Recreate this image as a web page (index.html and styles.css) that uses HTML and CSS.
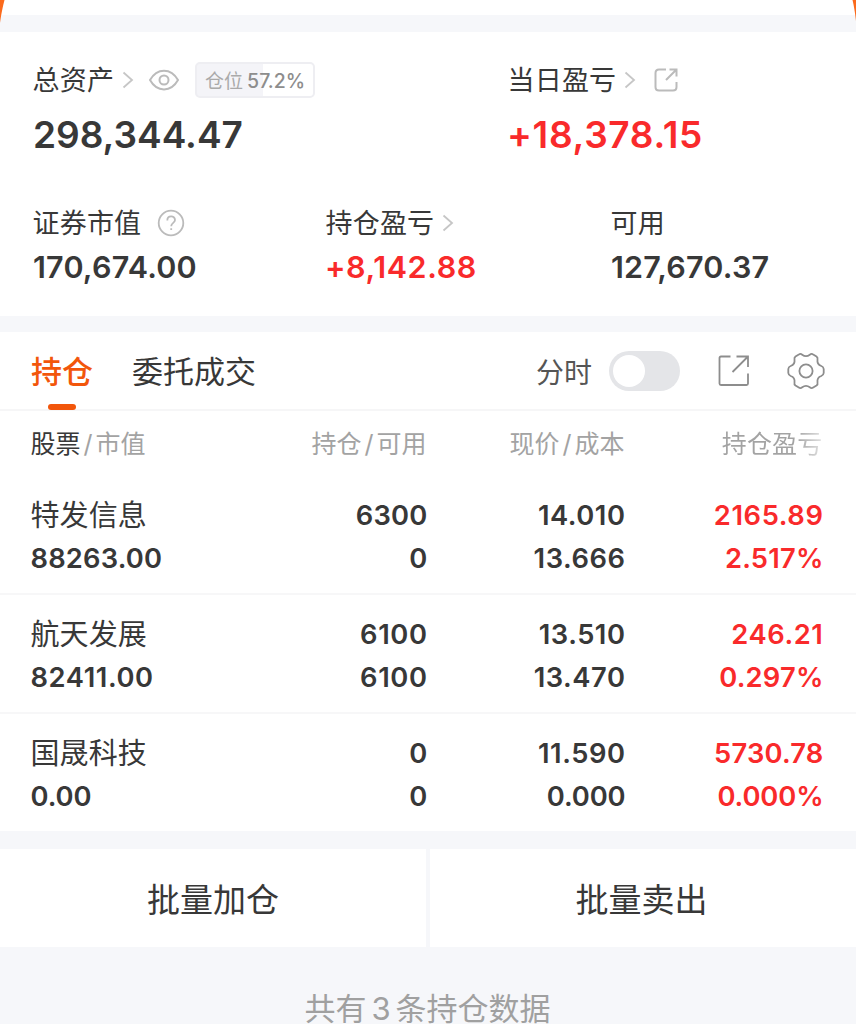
FILE: index.html
```
<!DOCTYPE html>
<html lang="zh-CN">
<head>
<meta charset="utf-8">
<title>持仓</title>
<link rel="stylesheet" href="styles.css">
</head>
<body>
<main class="page">
  <div class="top-edge">
    <svg class="corner corner-left" viewBox="0 0 6 24"><path d="M0 0H4.5C3 6 1.5 12 0 23Z"/></svg>
    <svg class="corner corner-right" viewBox="0 0 6 24"><path d="M6 0H2.500C4 6 5 12 6 21Z"/></svg>
  </div>

  <section class="summary">
    <div class="totals">
      <div class="metric">
        <div class="label">
          <span>总资产</span>
          <svg class="chevron" viewBox="0 0 12 18"><path d="M1.5 1.5L10 9L1.5 16.5"/></svg>
          <svg class="eye" viewBox="0 0 30 22"><path d="M1 11C8-1.5 22-1.5 29 11C22 23.500 8 23.500 1 11Z"/><circle cx="15" cy="11" r="4.500"/></svg>
          <span class="badge"><span class="badge-name">仓位</span><span class="badge-value">57.2%</span></span>
        </div>
        <div class="amount big">298,344.47</div>
      </div>
      <div class="metric">
        <div class="label">
          <span>当日盈亏</span>
          <svg class="chevron" viewBox="0 0 12 18"><path d="M1.5 1.5L10 9L1.500 16.500"/></svg>
          <svg class="share-small" viewBox="0 0 24 24"><path d="M12 1.500H5Q1.500 1.500 1.500 5V19Q1.500 22.500 5 22.500H19Q22.500 22.500 22.500 19V14M15.500 1.500H22.500V8.500M22.500 1.500L12 12"/></svg>
        </div>
        <div class="amount big red daily">+18,378.15</div>
      </div>
    </div>
    <div class="details">
      <div class="metric">
        <div class="label">
          <span>证券市值</span>
          <svg class="help" viewBox="0 0 28 28"><circle cx="14" cy="14" r="12.300"/><path d="M10.300 11.500C10.300 6 18 6.200 18 11C18 14 14.200 13.800 14.200 17.200M14.200 19.200V21"/></svg>
        </div>
        <div class="amount">170,674.00</div>
      </div>
      <div class="metric">
        <div class="label">
          <span>持仓盈亏</span>
          <svg class="chevron" viewBox="0 0 12 18"><path d="M1.500 1.500L10 9L1.500 16.500"/></svg>
        </div>
        <div class="amount red profit">+8,142.88</div>
      </div>
      <div class="metric">
        <div class="label"><span>可用</span></div>
        <div class="amount">127,670.37</div>
      </div>
    </div>
  </section>

  <section class="holdings">
    <nav class="tabs">
      <span class="tab active">持仓</span>
      <span class="tab">委托成交</span>
      <span class="mode">分时</span>
      <span class="switch"><span class="knob"></span></span>
      <svg class="share" viewBox="0 0 32 32"><path d="M12.500 1.500H3Q1.500 1.500 1.500 3V28.500Q1.500 30 3 30H28.500Q30 30 30 28.500V18.500M18.500 1.500H30V12M30 1.500L14.500 17"/></svg>
      <svg class="gear" viewBox="0 0 38 38"><path d="M11.800 2.500Q13.500 1.300 15.200 2.700Q19 5.700 22.800 2.700Q24.500 1.300 26.200 2.500L29.500 4.400Q31 5.500 30.500 7.500Q29.800 12.500 34.300 14Q36.500 14.800 36.700 17V21Q36.500 23.200 34.300 24Q29.800 25.500 30.500 30.500Q31 32.500 29.500 33.600L26.200 35.500Q24.500 36.700 22.800 35.300Q19 32.300 15.200 35.300Q13.500 36.700 11.800 35.500L8.500 33.600Q7 32.500 7.500 30.500Q8.200 25.500 3.700 24Q1.500 23.200 1.300 21V17Q1.500 14.800 3.700 14Q8.200 12.500 7.500 7.500Q7 5.500 8.500 4.400Z"/><circle cx="19" cy="19" r="6.600"/></svg>
    </nav>
    <div class="row head">
      <span><b>股票</b><i>/</i>市值</span>
      <span>持仓<i>/</i>可用</span>
      <span>现价<i>/</i>成本</span>
      <span class="fade">持仓盈亏</span>
    </div>
    <div class="row stock">
      <div><p class="name">特发信息</p><p>88263.00</p></div>
      <div><p>6300</p><p>0</p></div>
      <div class="price"><p>14.010</p><p>13.666</p></div>
      <div class="red"><p class="wide">2165.89</p><p>2.517%</p></div>
    </div>
    <div class="row stock">
      <div><p class="name">航天发展</p><p class="wide">82411.00</p></div>
      <div><p class="wide">6100</p><p class="wide">6100</p></div>
      <div class="price"><p>13.510</p><p>13.470</p></div>
      <div class="red"><p class="wide">246.21</p><p>0.297%</p></div>
    </div>
    <div class="row stock">
      <div><p class="name">国晟科技</p><p class="zero">0.00</p></div>
      <div><p>0</p><p>0</p></div>
      <div class="price"><p>11.590</p><p class="zero">0.000</p></div>
      <div class="red"><p>5730.78</p><p class="zero">0.000%</p></div>
    </div>
  </section>

  <div class="actions">
    <span class="action">批量加仓</span>
    <span class="action">批量卖出</span>
  </div>
  <footer class="count">共有<span class="num">3</span>条持仓数据</footer>
</main>
</body>
</html>
```
FILE: styles.css
```
* { box-sizing: border-box; }
body { margin: 0; background: #f6f7fa; }
.page {
  width: 856px;
  height: 1024px;
  overflow: hidden;
  display: flex;
  flex-direction: column;
  color: #383838;
  font-family: Inter, "Noto Sans CJK SC", sans-serif;
}
p { margin: 0; }
i { font-style: normal; }
svg { display: block; flex: none; fill: none; stroke: #bbb; stroke-width: 1.8; }
.red, .amount.red { color: #f92a2b; }

.top-edge { position: relative; height: 15px; flex: none; background: #fff; }
.corner { position: absolute; top: 0; width: 6px; height: 24px; fill: #fb6a1c; stroke: none; }
.corner-left { left: 0; }
.corner-right { right: 0; }

.summary { flex: none; height: 284px; margin-top: 17px; background: #fff; padding: 28px 33px 0; }
.totals { display: grid; grid-template-columns: 475px 1fr; height: 143px; }
.details { display: grid; grid-template-columns: 293px 285px 1fr; }
.label { display: flex; align-items: center; height: 40px; font-size: 27px; white-space: nowrap; }
.label > span:first-child { margin-left: -0.5px; padding-bottom: 3px; letter-spacing: 0.2px; }
.amount { font-size: 30.5px; line-height: 48px; font-weight: 600; letter-spacing: 0.2px; white-space: nowrap; }
.amount.big { font-size: 37px; line-height: 69px; letter-spacing: 0; }
.amount.daily { letter-spacing: 0.7px; }
.amount.profit { letter-spacing: 0.6px; }
.daily, .profit { margin-left: -1px; }
.chevron { width: 12px; height: 18px; margin-left: 8px; stroke: #c6c6c6; }
.eye { width: 30px; height: 22px; margin-left: 15px; stroke-width: 2; }
.badge {
  display: flex;
  align-items: center;
  justify-content: center;
  gap: 4px;
  width: 120px;
  height: 36px;
  margin-left: 16px;
  border: 2px solid #eeeef2;
  border-radius: 5px;
  background: linear-gradient(90deg, #f4f4f8 57.2%, #fff 57.2%);
  color: #aaa;
  font-size: 19px;
}
.badge-name { padding-bottom: 2px; }
.badge-value { color: #8d8d8d; font-weight: 500; font-size: 19.5px; padding-top: 1px; }
.share-small { width: 24px; height: 24px; margin-left: 18px; stroke-width: 2; }
.help { width: 28px; height: 28px; margin-left: 16px; }

.holdings { flex: none; height: 499px; margin-top: 16px; background: #fff; }
.tabs { display: flex; align-items: center; height: 79px; padding: 0 31px; border-bottom: 2px solid #f6f6f7; font-size: 31px; }
.tab { position: relative; margin-right: 39px; line-height: 78px; padding-top: 1px; height: 77px; }
.active { color: #f2560b; font-weight: 500; }
.active::after {
  content: "";
  position: absolute;
  left: 17px;
  bottom: -1px;
  width: 28px;
  height: 6px;
  border-radius: 3px;
  background: #f2560b;
}
.mode { margin-left: auto; font-size: 28px; color: #555; }
.switch { width: 71px; height: 40px; margin-left: 17px; padding: 4px; border-radius: 20px; background: #e4e5e8; }
.knob { display: block; width: 32px; height: 32px; border-radius: 50%; background: #fff; }
.share { width: 32px; height: 32px; margin-left: 38px; stroke: #8d8d8d; }
.gear { width: 38px; height: 38px; margin-left: 37px; stroke: #8d8d8d; }
.row { display: grid; grid-template-columns: 197px 200px 198px 198px; padding-left: 30.5px; }
.row > :not(:first-child) { text-align: right; }
.head { height: 65px; line-height: 67px; font-size: 25px; color: #a3a3a3; }
.head > :not(:first-child) { padding-right: 1px; }
.head b { font-weight: 400; color: #383838; }
.head i { padding: 0 3px; }
.head .fade { letter-spacing: 0.2px; background: linear-gradient(90deg, #a3a3a3 86%, #e6e6e6 100%); background-clip: text; color: transparent; }
.stock { height: 119px; padding-top: 18px; font-size: 27.3px; line-height: 43px; font-weight: 600; letter-spacing: 0.2px; border-bottom: 2px solid #f7f7f8; }
.stock:last-child { border-bottom: 0; }
.price { letter-spacing: 0.55px; }
.wide { letter-spacing: 0.6px; }
.zero { letter-spacing: -0.1px; }
.name { font-size: 29px; font-weight: 400; letter-spacing: 0.1px; }

.actions { flex: none; display: grid; grid-template-columns: 426px 426px; gap: 4px; height: 98px; margin-top: 18px; }
.action { background: #fff; text-align: center; font-size: 33px; line-height: 102px; height: 98px; }
.action:last-child { padding-right: 3px; }
.count { margin-top: 46px; text-align: center; font-size: 31px; line-height: 31px; color: #a0a0a0; white-space: nowrap; padding-right: 1px; }
.num { padding: 0 5px; }
```
